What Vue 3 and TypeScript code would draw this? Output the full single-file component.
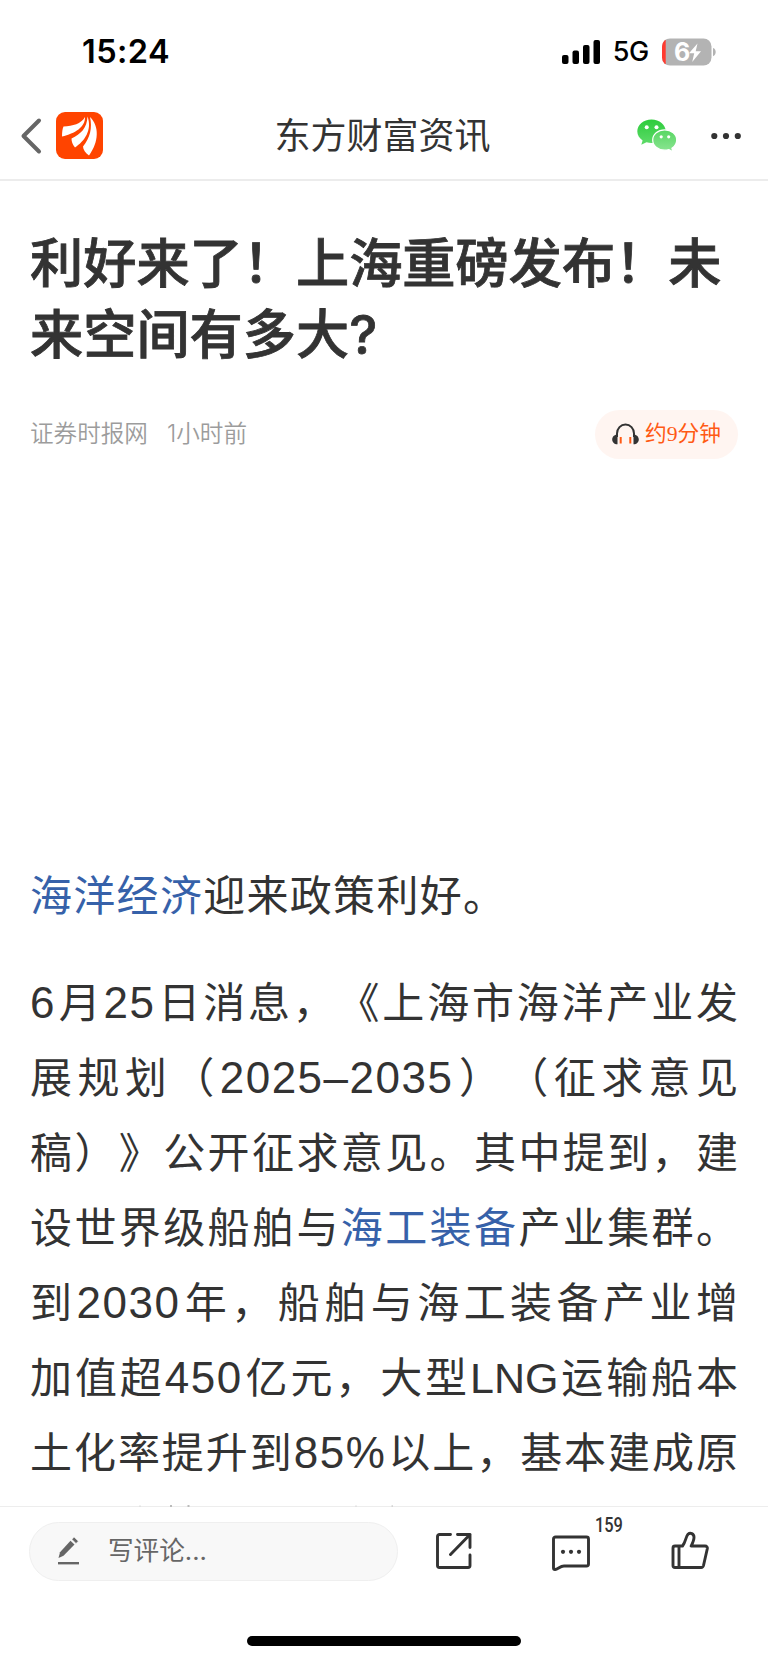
<script setup lang="ts">
interface Segment {
  text: string
  link?: boolean
}

interface Run {
  text: string
  kind: string
}

const headline: string[] = ['利好来了！上海重磅发布！未', '来空间有多大?']

const lead: Segment[] = [{ text: '海洋经济', link: true }, { text: '迎来政策利好。' }]

const lines: Segment[][] = [
  [{ text: '6月25日消息，《上海市海洋产业发' }],
  [{ text: '展规划（2025–2035）（征求意见' }],
  [{ text: '稿）》公开征求意见。其中提到，建' }],
  [{ text: '设世界级船舶与' }, { text: '海工装备', link: true }, { text: '产业集群。' }],
  [{ text: '到2030年，船舶与海工装备产业增' }],
  [{ text: '加值超450亿元，大型LNG运输船本' }],
  [{ text: '土化率提升到85%以上，基本建成原' }],
]

// Digits and Latin letters are set apart from the Chinese text with their own spacing.
function runs(row: Segment[]): Run[] {
  return row.flatMap((s) =>
    s.text
      .split(/([0-9–%]+|[A-Z]+)/)
      .filter((t) => t.length > 0)
      .map((t) => ({
        text: t,
        kind: s.link ? 'link' : /^[0-9]/.test(t) ? 'digits' : /^[A-Z]/.test(t) ? 'latin' : 'han',
      })),
  )
}
</script>

<template>
  <div class="page">
    <div class="status">
      <span class="time">15:24</span>
      <div class="status-right">
        <svg class="signal" width="39" height="24" viewBox="0 0 39 24">
          <rect x="0" y="15" width="6.5" height="9" rx="2" />
          <rect x="10.5" y="10.5" width="6.5" height="13.5" rx="2" />
          <rect x="21" y="5" width="6.5" height="19" rx="2" />
          <rect x="31.5" y="0" width="6.5" height="24" rx="2" />
        </svg>
        <span class="network">5G</span>
        <svg class="battery" width="54" height="28" viewBox="0 0 54 28">
          <defs>
            <clipPath id="shell"><rect x="0" y="0.5" width="49.5" height="27" rx="8" /></clipPath>
          </defs>
          <g clip-path="url(#shell)">
            <rect width="50" height="28" fill="#b3b3b3" />
            <rect width="3.7" height="28" fill="#ff3b30" />
          </g>
          <path d="M51 10c3.6.8 3.6 7.400 0 8.200z" fill="#b3b3b3" />
          <text x="12" y="23" class="charge">6</text>
          <path d="M35.500 5.500 27 15.300h5.200l-2 8.700 8.800-10.800h-5.300z" fill="#fff" />
        </svg>
      </div>
    </div>

    <header class="nav">
      <div class="nav-left">
        <svg class="back" width="22" height="38" viewBox="0 0 22 38">
          <path d="M19 3.500 3.500 19 19 34.500" fill="none" stroke="#666" stroke-width="4" stroke-linecap="round" stroke-linejoin="round" />
        </svg>
        <svg class="logo" width="47" height="47" viewBox="0 0 47 47">
          <rect width="47" height="47" rx="9" fill="#ff4400" />
          <path d="M6 24.500C6 20 6.500 16.500 7.500 14.500 17 14 25 12 29 5 29.500 15 19 21.500 6 24.500Z" fill="#fff" />
          <path d="M15.500 26.500C25 22 31 16 31.500 4.500 36.500 18 28.500 29 19 35.500 16.500 32.500 15.500 29.500 15.500 26.500Z" fill="#fff" />
          <path d="M27 34.500C34 26 36.500 16 34 5 43.500 14 43 30 33 43.500 29.500 41 27 37.500 27 34.500Z" fill="#fff" />
        </svg>
      </div>
      <h2 class="nav-title">东方财富资讯</h2>
      <div class="nav-right">
        <svg class="wechat" width="41" height="33" viewBox="0 0 41 33">
          <defs>
            <linearGradient id="g1" x1="0" y1="0" x2="0" y2="1">
              <stop offset="0" stop-color="#2dcc3c" /><stop offset="1" stop-color="#5fdb6a" />
            </linearGradient>
            <linearGradient id="g2" x1="0" y1="0" x2="0" y2="1">
              <stop offset="0" stop-color="#57d662" /><stop offset="1" stop-color="#8ce593" />
            </linearGradient>
          </defs>
          <path d="M14.500.5C6.500.500.300 5.700.300 12.300c0 3.800 2 7 5.300 9.200L4.300 25.700l5.200-2.500c1.600.4 3.300.7 5 .7 8 0 14.200-5.200 14.200-11.700S22.500.500 14.500.500Z" fill="url(#g1)" />
          <path d="M27.700 10.800c-6.700 0-12 4.600-12 10.200s5.300 10.200 12 10.200c1.500 0 2.900-.2 4.200-.6l4 2.100-1-3.500c3-1.900 4.800-4.800 4.800-8.200 0-5.600-5.300-10.200-12-10.200Z" fill="url(#g2)" stroke="#fff" stroke-width="1.200" />
          <circle cx="9.700" cy="8.300" r="2" fill="#fff" /><circle cx="19.500" cy="8.300" r="2" fill="#fff" />
          <circle cx="24.200" cy="17.800" r="1.600" fill="#fff" /><circle cx="31.700" cy="17.800" r="1.600" fill="#fff" />
        </svg>
        <svg width="30" height="8" viewBox="0 0 30 8" fill="#333">
          <circle cx="3.300" cy="4" r="3.100" /><circle cx="15" cy="4" r="3.100" /><circle cx="26.800" cy="4" r="3.100" />
        </svg>
      </div>
    </header>

    <main class="article">
      <h1 class="headline">
        <span v-for="row in headline" :key="row">{{ row }}</span>
      </h1>
      <div class="meta">
        <div class="source"><span>证券时报网</span><span>1小时前</span></div>
        <div class="listen">
          <svg width="27" height="22" viewBox="0 0 27 22">
            <path d="M5 14V10.500a8.500 9 0 0 1 17 0V14" fill="none" stroke="#333" stroke-width="2" />
            <path d="M5.500 11.500v9.800C2 21.300.2 19 .2 16.500s2-5 5.300-5ZM21.500 11.500v9.800c3.500 0 5.300-2.300 5.300-4.800s-2-5-5.300-5Z" fill="#333" />
            <path d="M8.700 14v6.500M18.300 14v6.500" stroke="#ff5a14" stroke-width="2" />
          </svg>
          <span>约9分钟</span>
        </div>
      </div>

      <p class="lead"><span v-for="s in lead" :key="s.text" :class="{ link: s.link }">{{ s.text }}</span></p>
      <div class="body">
        <div v-for="(row, i) in lines" :key="i" class="line"><span v-for="(r, j) in runs(row)" :key="j" :class="r.kind">{{ r.text }}</span></div>
      </div>
    </main>

    <footer class="bar">
      <svg class="peek" width="768" height="2" viewBox="0 0 768 2" fill="#bbb">
        <rect x="170" width="2" height="2" /><rect x="187.500" width="2" height="2" />
        <rect x="139" y="0.500" width="2" height="1" opacity=".4" /><rect x="355" y="0.500" width="2" height="1" opacity=".4" /><rect x="391.500" width="1.500" height="2" opacity=".5" />
      </svg>
      <div class="tools">
        <div class="comment">
          <svg width="22" height="30" viewBox="0 0 22 30" fill="#666">
            <path d="M.5 22 2 16.200 12.500 4.800 16.500 8.500 5.500 19.700Z" />
            <path d="M14 3.400 16 1 20.300 5.200 18 7.400Z" stroke="#f8f8f8" stroke-width=".5" />
            <rect x="0" y="26" width="21" height="2.400" />
          </svg>
          <span>写评论...</span>
        </div>
        <svg class="share" width="36" height="36" viewBox="0 0 36 36">
          <path d="M14.500 1.500H3.500a2 2 0 0 0-2 2v29a2 2 0 0 0 2 2h28.500a2 2 0 0 0 2-2V22M21.500 1.500H34V14.500M34 1.500 14.500 21.500" />
        </svg>
        <div class="replies">
          <svg width="38" height="36" viewBox="0 0 38 36">
            <path d="M3.500 2h31a2 2 0 0 1 2 2v25a2 2 0 0 1-2 2H12c-4 0-6 3.200-9 3.500-1 0-1.500-.5-1.500-1.500V4a2 2 0 0 1 2-2Z" />
            <g class="dots"><circle cx="11" cy="16.800" r="2.100" /><circle cx="19" cy="16.800" r="2.100" /><circle cx="27" cy="16.800" r="2.100" /></g>
          </svg>
          <span class="count">159</span>
        </div>
        <svg class="like" width="38" height="38" viewBox="0 0 38 38">
          <path d="M4 15h7.500C15 10.500 14.500 6 17 3.300c2.300-2.200 6-.6 6 3 0 3-1.200 5.500-2.800 8.700H34c1.800 0 2.600 1.200 2.300 2.700L32.500 34.500c-.3 1.200-1 2-2.300 2H4a2 2 0 0 1-2-2V17a2 2 0 0 1 2-2ZM8 15v21.500" />
        </svg>
      </div>
      <div class="home"></div>
    </footer>
  </div>
</template>

<style>
body { background: #fff; }
</style>

<style scoped>
* { box-sizing: border-box; }
.page {
  width: 768px;
  height: 1663px;
  overflow: hidden;
  display: flex;
  flex-direction: column;
  background: #fff;
  color: #333;
  font-family: Inter, "Noto Sans CJK SC", sans-serif;
  text-spacing-trim: space-all;
}
.status {
  height: 100px;
  flex: none;
  padding: 3px 52px 0 82px;
  display: flex;
  justify-content: space-between;
  align-items: center;
  color: #000;
}
.time { font-size: 32.500px; font-weight: 600; letter-spacing: 0.400px; }
.status-right { display: flex; align-items: center; }
.network { font-size: 27px; font-weight: 500; margin: 0 13px 0 12px; letter-spacing: -0.3px; }
.charge { font-family: Inter, sans-serif; font-size: 25px; font-weight: 700; fill: #fff; }
.nav {
  height: 81px;
  flex: none;
  padding: 0 27px 8px 20px;
  display: grid;
  grid-template-columns: 1fr auto 1fr;
  align-items: center;
  border-bottom: 2px solid #ececec;
}
.nav-left { display: flex; align-items: center; gap: 14px; }
.nav-title { margin: 1px -2px 0 2px; font-size: 36px; line-height: 50px; font-weight: 400; }
.nav-right { display: flex; align-items: center; justify-content: flex-end; gap: 33px; }
.article { flex: 1; min-height: 0; overflow: hidden; padding: 47px 30px 0; }
.headline { margin: 0; font-size: 53.2px; line-height: 71px; font-weight: 500; white-space: nowrap; -webkit-text-stroke: 0.800px #333; }
.headline span { display: block; }
.meta { height: 50px; margin-top: 39px; display: flex; justify-content: space-between; align-items: center; }
.source { display: flex; gap: 19px; font-size: 23.6px; line-height: 32px; color: #9c9c9c; font-weight: 350; }
.listen {
  width: 143px;
  height: 49px;
  border-radius: 25px;
  padding-left: 17px;
  display: flex;
  align-items: center;
  gap: 6px;
  background: #fff5f1;
  color: #ff5a14;
  font-family: "Liberation Serif", "Noto Sans CJK SC", serif;
  font-size: 21.7px;
  line-height: 30px;
}
.lead { margin: 399px 0 32px; font-size: 42px; letter-spacing: 1.300px; line-height: 75px; }
.body { font-size: 42px; line-height: 75px; }
.line { height: 75px; white-space: nowrap; text-align: justify; text-align-last: justify; }
.digits { font-family: "Liberation Sans", sans-serif; font-size: 44px; line-height: 1; letter-spacing: 1.500px; }
.latin { font-family: "Liberation Sans", sans-serif; font-size: 43px; line-height: 1; }
.link { color: #3661a9; }
.bar { height: 157px; flex: none; border-top: 1px solid #ededed; position: relative; }
.peek { position: absolute; left: 0; top: -2px; }
.tools { height: 88px; display: flex; align-items: center; padding-left: 29px; }
.comment {
  width: 369px;
  height: 59px;
  border: 1px solid #efefef;
  border-radius: 30px;
  background: #f8f8f8;
  display: flex;
  align-items: center;
  gap: 28px;
  padding-left: 28px;
  font-size: 25.6px;
  line-height: 36px;
  color: #666;
}
.share, .replies svg, .like { fill: none; stroke: #333; stroke-width: 2.900; stroke-linecap: round; stroke-linejoin: round; display: block; }
.share { margin-left: 38px; }
.replies { position: relative; margin-left: 80px; padding-top: 3px; }
.replies svg .dots { fill: #333; stroke: none; }
.count {
  position: absolute;
  left: 43px;
  top: -18px;
  font: 500 19.500px/24px Roboto, sans-serif;
  transform: scaleX(.84);
  transform-origin: left;
}
.like { margin-left: 81px; margin-top: -3px; }
.home { width: 274px; height: 10px; margin: 41px auto 0; border-radius: 5px; background: #000; }
</style>
